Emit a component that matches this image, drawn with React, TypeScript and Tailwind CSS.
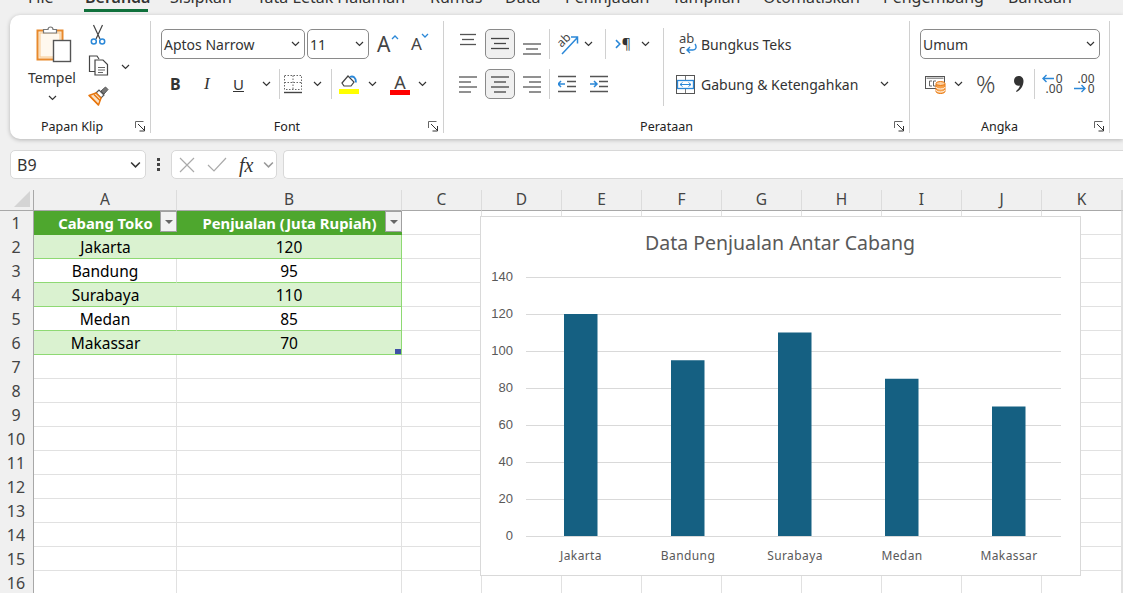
const tabs = [
  ["File", 28],
  ["Beranda", 85],
  ["Sisipkan", 170],
  ["Tata Letak Halaman", 257],
  ["Rumus", 430],
  ["Data", 505],
  ["Peninjauan", 565],
  ["Tampilan", 672],
  ["Otomatiskan", 763],
  ["Pengembang", 883],
  ["Bantuan", 1008],
] as const;

const columns = ["A", "B", "C", "D", "E", "F", "G", "H", "I", "J", "K", ""];
const rows = Array.from({ length: 16 }, (_, i) => i + 1);

const sales = [
  { name: "Jakarta", value: 120 },
  { name: "Bandung", value: 95 },
  { name: "Surabaya", value: 110 },
  { name: "Medan", value: 85 },
  { name: "Makassar", value: 70 },
];

function Chev({ className = "" }: { className?: string }) {
  return (
    <svg width="9" height="6" viewBox="0 0 9 6" className={`shrink-0 ${className}`}>
      <path d="M1 1l3.500 3.500L8 1" fill="none" stroke="#333" strokeWidth="1.200" />
    </svg>
  );
}

function Sep({ className = "h-[30px]" }: { className?: string }) {
  return <div className={`w-px bg-[#d0d0d0] shrink-0 ${className}`} />;
}

function Launcher() {
  return (
    <svg width="11" height="11" viewBox="0 0 11 11" className="absolute right-[4px] bottom-[1px]">
      <path d="M.5 7V.5h8" fill="none" stroke="#666" />
      <path d="M3 3l6 6M9.500 5v5h-5" fill="none" stroke="#333" />
    </svg>
  );
}

function Lines({ rows, active = false }: { rows: string[]; active?: boolean }) {
  return (
    <svg width="18" height="18" viewBox="0 0 18 18" className="shrink-0">
      {rows.map((d, i) => (
        <path key={i} d={d} stroke={active ? "#444" : "#555"} strokeWidth="1.300" fill="none" />
      ))}
    </svg>
  );
}

function PressedBox({ children }: { children: React.ReactNode }) {
  return (
    <div className="w-[30px] h-[30px] shrink-0 rounded-[5px] border border-[#8a8a8a] bg-[#f0f0f0] flex items-center justify-center">
      {children}
    </div>
  );
}

function Select({ label, className }: { label: string; className: string }) {
  return (
    <div className={`h-[30px] shrink-0 rounded-[5px] border border-[#8a8a8a] bg-white flex items-center justify-between pl-[2px] pr-[4px] text-[14px] text-[#333] ${className}`}>
      <span>{label}</span>
      <Chev />
    </div>
  );
}

function Clipboard() {
  return (
    <svg width="36" height="40" viewBox="0 0 36 40">
      <rect x="1.500" y="6.500" width="25" height="29" fill="#fdeed8" stroke="#e8892c" strokeWidth="2" />
      <rect x="4" y="9" width="20" height="24" fill="#fff8ee" stroke="#f7c88f" />
      <path d="M7.500 9V5.500h4.500a2.500 2.500 0 0 1 5 0h3.500V9z" fill="#fff" stroke="#777" strokeWidth="1.200" />
      <rect x="17.500" y="16.500" width="17" height="21" fill="#fff" stroke="#555" strokeWidth="1.400" />
    </svg>
  );
}

function ScissorsIcon() {
  return (
    <svg width="16" height="21" viewBox="0 0 16 21">
      <path d="M3.500 1l6.500 14M12.500 1L6 15" fill="none" stroke="#444" strokeWidth="1.200" />
      <circle cx="3.800" cy="17.500" r="2.500" fill="none" stroke="#2b88d8" strokeWidth="1.500" />
      <circle cx="12.200" cy="17.500" r="2.500" fill="none" stroke="#2b88d8" strokeWidth="1.500" />
    </svg>
  );
}

function CopyIcon() {
  return (
    <svg width="21" height="21" viewBox="0 0 21 21">
      <path d="M7 16.500H1.500V1H9l2 3" fill="#fff" stroke="#444" strokeWidth="1.200" />
      <path d="M7 5h8l4.500 4.500V20H7z" fill="#fff" stroke="#444" strokeWidth="1.200" />
      <path d="M10 12.500h7M10 15h7M10 17.500h5" stroke="#666" />
    </svg>
  );
}

function BrushIcon() {
  return (
    <svg width="21" height="20" viewBox="0 0 21 20">
      <path d="M8 7l3-3 5 5-3 3z" fill="#fff" stroke="#555" strokeWidth="1.200" />
      <path d="M13 5l4.500-4 2.500 2.500-4 4.500z" fill="#777" stroke="#555" />
      <path d="M1 9.500L8 7l5 5-2.500 7z" fill="#fbe3c8" stroke="#e8770f" strokeWidth="1.500" strokeLinejoin="round" />
      <path d="M2 10l8.500 9M6 8.500l6 6" stroke="#e8770f" strokeWidth="1.500" />
    </svg>
  );
}

function BorderIcon() {
  return (
    <svg width="20" height="20" viewBox="0 0 20 20">
      <path d="M1.500 1.500h17v14h-17zM10 1.500v14M1.500 8.500h17" fill="none" stroke="#666" strokeDasharray="1.500 1.500" />
      <path d="M1 18.500h18" stroke="#444" strokeWidth="1.400" />
    </svg>
  );
}

function FillIcon() {
  return (
    <svg width="20" height="21" viewBox="0 0 20 21">
      <path d="M3 9l6-7 6 6-3 4H5z" fill="#fff" stroke="#444" strokeWidth="1.200" />
      <path d="M11 3c3-1.500 6 .5 6 5.500" fill="none" stroke="#2b88d8" strokeWidth="1.800" />
      <rect x="0" y="15" width="20" height="5" fill="#ffff00" />
    </svg>
  );
}

function FontColorIcon() {
  return (
    <div className="w-[20px] h-[21px] relative flex flex-col items-center">
      <span className="text-[18px] leading-[17px] text-[#444]">A</span>
      <div className="w-[20px] h-[5px] bg-[#ff0000] mt-[-1px]" />
    </div>
  );
}

function OrientationIcon() {
  return (
    <svg width="22" height="22" viewBox="0 0 22 22">
      <path d="M5 21L20 5M14 4h6.500v6.500" fill="none" stroke="#2b88d8" strokeWidth="1.500" />
      <text x="0" y="12" fontSize="12" fill="#444" transform="rotate(-45 6 8)" fontFamily="Noto Sans">ab</text>
    </svg>
  );
}

function DirectionIcon() {
  return (
    <div className="w-[16px] flex items-center text-[14px] leading-none text-[#333]">
      <svg width="6" height="10" viewBox="0 0 6 10" className="mr-[1px]">
        <path d="M1 1l4 4-4 4" fill="none" stroke="#2b88d8" strokeWidth="1.600" />
      </svg>
      ¶
    </div>
  );
}

function IndentIcon({ flip }: { flip?: boolean }) {
  return (
    <svg width="18" height="18" viewBox="0 0 18 18">
      <path d="M0 1.500h18M9 6.500h9M9 11.500h9M0 16.500h18" stroke="#555" strokeWidth="1.500" />
      {flip ? (
        <path d="M0 9h7M4 6l3 3-3 3" fill="none" stroke="#2b88d8" strokeWidth="1.500" />
      ) : (
        <path d="M7 9H0M3 6L0 9l3 3" fill="none" stroke="#2b88d8" strokeWidth="1.500" />
      )}
    </svg>
  );
}

function WrapIcon() {
  return (
    <div className="relative w-[18px] h-[22px] text-[13px] leading-[11px] text-[#444]">
      <span className="absolute left-0 top-0">ab</span>
      <span className="absolute left-0 top-[11px]">c</span>
      <svg width="12" height="12" viewBox="0 0 12 12" className="absolute right-0 bottom-0">
        <path d="M10 1c2 3 1 6-2 6H2M5 4L2 7l3 3" fill="none" stroke="#2b88d8" strokeWidth="1.400" />
      </svg>
    </div>
  );
}

function MergeIcon() {
  return (
    <svg width="19" height="19" viewBox="0 0 19 19">
      <rect x=".5" y=".5" width="18" height="18" fill="#fff" stroke="#555" />
      <path d="M9.500 1v4M9.500 14v4" stroke="#777" />
      <rect x="1.500" y="5.500" width="16" height="8" fill="#fff" stroke="#2b88d8" strokeWidth="1.300" />
      <path d="M4 9.500h11M6.500 7.500l-2.500 2 2.500 2M12.500 7.500l2.500 2-2.500 2" fill="none" stroke="#2b88d8" />
    </svg>
  );
}

function AccountingIcon() {
  return (
    <svg width="21" height="20" viewBox="0 0 21 20">
      <rect x=".5" y="2.500" width="19" height="12" fill="#fff" stroke="#555" />
      <rect x="1.500" y="3.500" width="17" height="1.500" fill="#999" />
      <path d="M7 7H4.500v5H7M11 7H8.500v5H11" fill="none" stroke="#666" />
      <path d="M11 10v7.500c0 1 2 2 4.500 2s4.500-1 4.500-2V10z" fill="#f7a24b" stroke="#e8770f" />
      <ellipse cx="15.500" cy="9.500" rx="4.500" ry="2" fill="#fbd0a2" stroke="#e8770f" />
      <path d="M11 13c0 1 2 2 4.500 2s4.500-1 4.500-2M11 16c0 1 2 2 4.500 2s4.500-1 4.500-2" fill="none" stroke="#fff" />
    </svg>
  );
}

function DecimalIcon({ more }: { more?: boolean }) {
  return (
    <div className="relative w-[21px] h-[20px] text-[12px] leading-[10px] text-[#444] text-right">
      <div>{more ? ".00" : "0"}</div>
      <div>{more ? "0" : ".00"}</div>
      <svg width="12" height="9" viewBox="0 0 12 9" className={`absolute ${more ? "left-0 top-[10px]" : "left-0 top-0"}`}>
        {more ? (
          <path d="M0 4.500h11M7.500 1L11 4.500 7.500 8" fill="none" stroke="#2b88d8" strokeWidth="1.400" />
        ) : (
          <path d="M12 4.500H1M4.500 1L1 4.500 4.500 8" fill="none" stroke="#2b88d8" strokeWidth="1.400" />
        )}
      </svg>
    </div>
  );
}

function FilterButton() {
  return (
    <div className="absolute right-0 top-0 w-[17px] h-[21px] border border-[#a0a0a0] bg-[#f2f2f2] flex items-center justify-center">
      <div className="w-0 h-0 border-l-[4px] border-r-[4px] border-t-[4px] border-l-transparent border-r-transparent border-t-[#666]" />
    </div>
  );
}

function Ribbon() {
  return (
    <div className="ml-[10px] h-[124px] bg-white rounded-l-[10px] shadow-[0_1px_4px_rgba(0,0,0,0.25)] flex text-[#333]">
      {/* Papan Klip */}
      <div className="relative w-[141px] my-[6px] border-r border-[#d0d0d0] shrink-0">
        <div className="flex h-[90px] pt-[3px]">
          <div className="w-[70px] shrink-0 flex flex-col items-center pl-[14px]">
            <div className="ml-[4px]"><Clipboard /></div>
            <span className="text-[14px] leading-[20px] mt-[4px]">Tempel</span>
            <Chev className="mt-[7px]" />
          </div>
          <div className="flex flex-col items-center w-[32px] ml-[2px] gap-[10px]">
            <ScissorsIcon />
            <CopyIcon />
            <BrushIcon />
          </div>
          <Chev className="ml-[7px] mt-[40px]" />
        </div>
        <div className="absolute left-[31px] bottom-[-2px] text-[12.500px] leading-[16px] text-[#222]">Papan Klip</div>
        <Launcher />
      </div>

      {/* Font */}
      <div className="relative w-[293px] my-[6px] border-r border-[#d0d0d0] shrink-0">
        <div className="flex items-center h-[30px] mt-[8px] ml-[10px]">
          <Select label="Aptos Narrow" className="w-[144px]" />
          <Select label="11" className="w-[62px] ml-[2px]" />
          <div className="flex items-start ml-[8px] w-[22px] text-[21px] leading-[24px] text-[#444] relative">
            A
            <svg width="8" height="5" viewBox="0 0 8 5" className="absolute right-0 top-[3px]">
              <path d="M1 4l3-3 3 3" fill="none" stroke="#2b88d8" strokeWidth="1.300" />
            </svg>
          </div>
          <div className="flex items-start ml-[12px] w-[18px] text-[17px] leading-[22px] text-[#444] relative">
            A
            <svg width="8" height="5" viewBox="0 0 8 5" className="absolute right-0 top-0">
              <path d="M1 1l3 3 3-3" fill="none" stroke="#2b88d8" strokeWidth="1.300" />
            </svg>
          </div>
        </div>
        <div className="flex items-center h-[30px] mt-[10px] ml-[10px]">
          <span className="w-[41px] pl-[9px] text-[16px] font-bold">B</span>
          <span className="w-[30px] pl-[2px] text-[17px] italic font-['Liberation_Serif',serif]">I</span>
          <span className="w-[30px] pl-[1px] text-[15px] underline">U</span>
          <Chev />
          <Sep className="h-[30px] ml-[8px]" />
          <div className="ml-[3px] shrink-0"><BorderIcon /></div>
          <Chev className="ml-[10px]" />
          <Sep className="h-[30px] ml-[9px]" />
          <div className="ml-[7px] shrink-0"><FillIcon /></div>
          <Chev className="ml-[9px]" />
          <div className="ml-[13px] shrink-0"><FontColorIcon /></div>
          <Chev className="ml-[8px]" />
        </div>
        <div className="absolute inset-x-0 bottom-[-2px] pr-[20px] text-center text-[12.500px] leading-[16px] text-[#222]">Font</div>
        <Launcher />
      </div>

      {/* Perataan */}
      <div className="relative w-[466px] my-[6px] border-r border-[#d0d0d0] shrink-0 flex">
        <div className="w-[219px] shrink-0">
          <div className="flex items-center h-[30px] mt-[8px] pl-[15px]">
            <div className="-mt-[9px]"><Lines rows={["M1 3.500h16", "M3 8.500h12", "M1 13.500h16"]} /></div>
            <div className="ml-[8px]"><PressedBox><Lines active rows={["M0 3.500h18", "M3 8.500h12", "M0 13.500h18"]} /></PressedBox></div>
            <div className="ml-[8px] mt-[9px]"><Lines rows={["M0 4h18", "M3 9h12", "M0 14h18"]} /></div>
            <Sep className="h-[30px] ml-[8px]" />
            <div className="ml-[7px] shrink-0"><OrientationIcon /></div>
            <Chev className="ml-[5px]" />
            <Sep className="h-[30px] ml-[12px]" />
            <div className="ml-[9px]"><DirectionIcon /></div>
            <Chev className="ml-[10px]" />
          </div>
          <div className="flex items-center h-[30px] mt-[10px] pl-[15px]">
            <Lines rows={["M0 2h18", "M0 7h12", "M0 12h18", "M0 17h12"]} />
            <div className="ml-[8px]"><PressedBox><Lines active rows={["M0 2h18", "M3 7h12", "M0 12h18", "M3 17h12"]} /></PressedBox></div>
            <div className="ml-[8px]"><Lines rows={["M0 2h18", "M6 7h12", "M0 12h18", "M6 17h12"]} /></div>
            <Sep className="h-[30px] ml-[8px]" />
            <div className="ml-[8px]"><IndentIcon /></div>
            <div className="ml-[14px]"><IndentIcon flip /></div>
          </div>
        </div>
        <Sep className="h-[78px] mt-[7px]" />
        <div className="pl-[12px]">
          <div className="flex items-center h-[30px] mt-[8px] text-[14px] pl-[3px]">
            <WrapIcon />
            <span className="ml-[4px]">Bungkus Teks</span>
          </div>
          <div className="flex items-center h-[30px] mt-[10px] text-[14px]">
            <MergeIcon />
            <span className="ml-[6px]">Gabung &amp; Ketengahkan</span>
            <Chev className="ml-[22px]" />
          </div>
        </div>
        <div className="absolute inset-x-0 bottom-[-2px] text-center text-[12.500px] leading-[16px] text-[#222] pr-[20px]">Perataan</div>
        <Launcher />
      </div>

      {/* Angka */}
      <div className="relative w-[200px] my-[6px] border-r border-[#d0d0d0] shrink-0">
        <div className="h-[30px] mt-[8px] ml-[10px]">
          <Select label="Umum" className="w-[180px]" />
        </div>
        <div className="flex items-center h-[30px] mt-[10px] ml-[15px]">
          <AccountingIcon />
          <Chev className="ml-[8px]" />
          <span className="ml-[13px] text-[24px] leading-none font-light text-[#444]">%</span>
          <svg width="11" height="18" viewBox="0 0 11 18" className="ml-[17px]">
            <path d="M5.500 1c3 0 5 2 5 5 0 5-3 9-7 11l-.5-1c2-1.500 3.500-3.500 4-5.500-3 1-6-1-6-4.500C1 3 3 1 5.500 1z" fill="#333" />
          </svg>
          <Sep className="h-[30px] ml-[10px]" />
          <div className="ml-[7px]"><DecimalIcon /></div>
          <div className="ml-[11px]"><DecimalIcon more /></div>
        </div>
        <div className="absolute inset-x-0 bottom-[-2px] text-center text-[12.500px] leading-[16px] text-[#222] pr-[20px]">Angka</div>
        <Launcher />
      </div>
    </div>
  );
}

function FormulaBar() {
  return (
    <div className="flex items-center h-[29px] mt-[11px] ml-[10px]">
      <div className="w-[136px] h-[29px] shrink-0 bg-white border border-[#d8d8d8] rounded-[5px] flex items-center justify-between pl-[6px] pr-[4px] text-[16px] text-[#333]">
        <span>B9</span>
        <Chev className="scale-125 mr-[1px]" />
      </div>
      <div className="w-[3px] ml-[11px] flex flex-col gap-[2px]">
        <div className="w-[3px] h-[3px] bg-[#444]" />
        <div className="w-[3px] h-[3px] bg-[#444]" />
        <div className="w-[3px] h-[3px] bg-[#444]" />
      </div>
      <div className="w-[106px] h-[29px] ml-[11px] shrink-0 bg-white border border-[#d8d8d8] rounded-[5px] flex items-center pl-[7px]">
        <svg width="16" height="16" viewBox="0 0 16 16"><path d="M1 1l14 14M15 1L1 15" stroke="#aaa" strokeWidth="1.200" /></svg>
        <svg width="20" height="15" viewBox="0 0 20 15" className="ml-[12px]"><path d="M1 8l6 6L19 1" fill="none" stroke="#aaa" strokeWidth="1.200" /></svg>
        <span className="ml-[12px] w-[19px] text-[20px] leading-none italic font-['Liberation_Serif',serif] font-normal text-[#333]">fx</span>
        <Chev className="ml-[6px] opacity-50 scale-125" />
      </div>
      <div className="flex-1 h-[29px] ml-[6px] bg-white border border-[#d8d8d8] rounded-l-[5px] border-r-0" />
    </div>
  );
}

function Chart() {
  // svg y coords: 140 sits at 60, 0 sits at 319
  const zero = 319;
  const perUnit = 1.85;
  return (
    <div className="absolute left-[480px] top-[26px] w-[601px] h-[360px] bg-white border border-[#d9d9d9]">
      <svg width="599" height="358" viewBox="0 0 599 358" className="block">
        <text x="299" y="33" textAnchor="middle" fontSize="19.500" fill="#595959" fontFamily="Noto Sans">
          Data Penjualan Antar Cabang
        </text>
        {[0, 20, 40, 60, 80, 100, 120, 140].map((v) => {
          const y = zero - v * perUnit;
          return (
            <g key={v}>
              <line x1="45" x2="580" y1={y + 0.5} y2={y + 0.5} stroke="#d9d9d9" />
              <text x="32" y={y + 4} textAnchor="end" fontSize="13" fill="#595959" fontFamily="Liberation Sans">{v}</text>
            </g>
          );
        })}
        {sales.map((s, i) => {
          const x = 83 + i * 107;
          return (
            <g key={s.name}>
              <rect x={x} y={zero - s.value * perUnit} width="33.500" height={s.value * perUnit} fill="#156082" />
              <text x={x + 17} y="343" textAnchor="middle" fontSize="12" fill="#595959" fontFamily="Noto Sans" letterSpacing=".4">{s.name}</text>
            </g>
          );
        })}
      </svg>
    </div>
  );
}

function Sheet() {
  const table: Record<number, [string, string]> = {
    2: ["Jakarta", "120"],
    3: ["Bandung", "95"],
    4: ["Surabaya", "110"],
    5: ["Medan", "85"],
    6: ["Makassar", "70"],
  };

  return (
    <div className="relative mt-[11px]">
      <div className="grid grid-cols-[34px_143px_225px_repeat(9,80px)_1fr] auto-rows-[24px]">
        {/* header row */}
        <div className="h-[21px] bg-[#f0f0f0] border-r border-b border-[#a8a8a8] flex items-end justify-end pr-[3px] pb-[3px]">
          <div className="w-0 h-0 border-l-[16px] border-b-[16px] border-l-transparent border-b-[#d4d4d4]" />
        </div>
        {columns.map((c) => (
          <div key={c} className="h-[21px] bg-[#f0f0f0] border-r border-b border-r-[#dcdcdc] border-b-[#a8a8a8] flex items-center justify-center text-[15.500px] text-[#444]">
            {c}
          </div>
        ))}

        {rows.map((r) => {
          const data = table[r];
          return (
            <div key={r} className="contents">
              <div className="-mt-[3px] h-[24px] bg-[#f0f0f0] border-r border-[#a8a8a8] flex items-center justify-center pl-[1px] pr-[2px] text-[16px] text-[#444]">
                {r}
              </div>
              {r === 1 ? (
                <>
                  <div className="-mt-[3px] h-[24px] relative bg-[#4ea72e] text-white font-bold text-[14.800px] flex items-center justify-center">
                    Cabang Toko
                    <FilterButton />
                  </div>
                  <div className="-mt-[3px] h-[24px] relative bg-[#4ea72e] text-white font-bold text-[14.800px] flex items-center justify-center">
                    Penjualan (Juta Rupiah)
                    <FilterButton />
                  </div>
                </>
              ) : data ? (
                <>
                  <div className={`-mt-[3px] h-[24px] pt-[2px] border-b border-[#8ed973] flex items-center justify-center text-[15.500px] text-black ${r % 2 === 0 ? "bg-[#daf2d0]" : "bg-white border-r border-r-[#e1e1e1]"}`}>
                    {data[0]}
                  </div>
                  <div className={`-mt-[3px] h-[24px] pt-[2px] relative border-b border-r border-[#8ed973] flex items-center justify-center text-[15.500px] text-black ${r % 2 === 0 ? "bg-[#daf2d0]" : "bg-white"}`}>
                    {data[1]}
                    {r === 6 && <div className="absolute right-0 bottom-0 w-[6px] h-[5px] bg-[#3f51a5]" />}
                  </div>
                </>
              ) : (
                <>
                  <div className="-mt-[3px] h-[24px] bg-white border-r border-b border-[#e1e1e1]" />
                  <div className="-mt-[3px] h-[24px] bg-white border-r border-b border-[#e1e1e1]" />
                </>
              )}
              {columns.slice(2).map((c) => (
                <div key={c} className="-mt-[3px] h-[24px] bg-white border-r border-b border-[#e1e1e1]" />
              ))}
            </div>
          );
        })}
      </div>
      <Chart />
    </div>
  );
}

export default function App() {
  return (
    <div className="w-[1123px] h-[593px] overflow-hidden bg-[#f0f0f0] font-['Noto_Sans',sans-serif]">
      <div className="relative h-[15px] overflow-hidden">
        {tabs.map(([label, left]) => (
          <div
            key={label}
            className={`absolute bottom-[8px] text-[16px] leading-[20px] text-[#333] whitespace-nowrap ${label === "Beranda" ? "font-semibold" : ""}`}
            style={{ left }}
          >
            {label}
          </div>
        ))}
        <div className="absolute left-[84px] top-[9px] w-[64px] h-[3px] bg-[#0f703b]" />
      </div>
      <Ribbon />
      <FormulaBar />
      <Sheet />
    </div>
  );
}
